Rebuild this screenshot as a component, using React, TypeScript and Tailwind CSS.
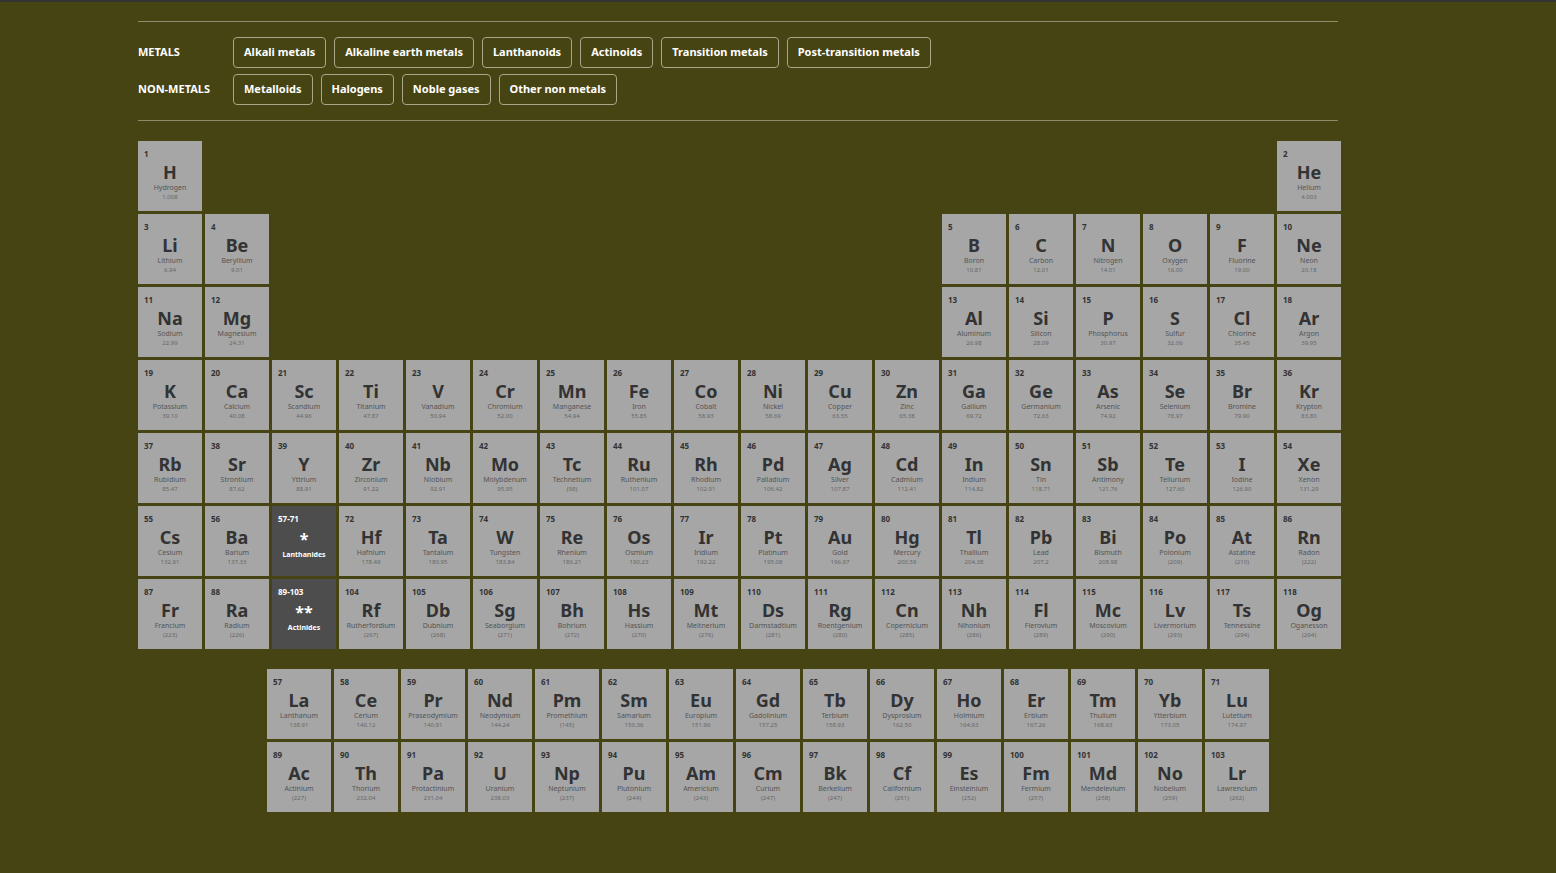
const E = `1 H Hydrogen 1.008 1 1
2 He Helium 4.003 1 18
3 Li Lithium 6.94 2 1
4 Be Beryllium 9.01 2 2
5 B Boron 10.81 2 13
6 C Carbon 12.01 2 14
7 N Nitrogen 14.01 2 15
8 O Oxygen 16.00 2 16
9 F Fluorine 19.00 2 17
10 Ne Neon 20.18 2 18
11 Na Sodium 22.99 3 1
12 Mg Magnesium 24.31 3 2
13 Al Aluminum 26.98 3 13
14 Si Silicon 28.09 3 14
15 P Phosphorus 30.97 3 15
16 S Sulfur 32.06 3 16
17 Cl Chlorine 35.45 3 17
18 Ar Argon 39.95 3 18
19 K Potassium 39.10 4 1
20 Ca Calcium 40.08 4 2
21 Sc Scandium 44.96 4 3
22 Ti Titanium 47.87 4 4
23 V Vanadium 50.94 4 5
24 Cr Chromium 52.00 4 6
25 Mn Manganese 54.94 4 7
26 Fe Iron 55.85 4 8
27 Co Cobalt 58.93 4 9
28 Ni Nickel 58.69 4 10
29 Cu Copper 63.55 4 11
30 Zn Zinc 65.38 4 12
31 Ga Gallium 69.72 4 13
32 Ge Germanium 72.63 4 14
33 As Arsenic 74.92 4 15
34 Se Selenium 78.97 4 16
35 Br Bromine 79.90 4 17
36 Kr Krypton 83.80 4 18
37 Rb Rubidium 85.47 5 1
38 Sr Strontium 87.62 5 2
39 Y Yttrium 88.91 5 3
40 Zr Zirconium 91.22 5 4
41 Nb Niobium 92.91 5 5
42 Mo Molybdenum 95.95 5 6
43 Tc Technetium (98) 5 7
44 Ru Ruthenium 101.07 5 8
45 Rh Rhodium 102.91 5 9
46 Pd Palladium 106.42 5 10
47 Ag Silver 107.87 5 11
48 Cd Cadmium 112.41 5 12
49 In Indium 114.82 5 13
50 Sn Tin 118.71 5 14
51 Sb Antimony 121.76 5 15
52 Te Tellurium 127.60 5 16
53 I Iodine 126.90 5 17
54 Xe Xenon 131.29 5 18
55 Cs Cesium 132.91 6 1
56 Ba Barium 137.33 6 2
72 Hf Hafnium 178.49 6 4
73 Ta Tantalum 180.95 6 5
74 W Tungsten 183.84 6 6
75 Re Rhenium 186.21 6 7
76 Os Osmium 190.23 6 8
77 Ir Iridium 192.22 6 9
78 Pt Platinum 195.08 6 10
79 Au Gold 196.97 6 11
80 Hg Mercury 200.59 6 12
81 Tl Thallium 204.38 6 13
82 Pb Lead 207.2 6 14
83 Bi Bismuth 208.98 6 15
84 Po Polonium (209) 6 16
85 At Astatine (210) 6 17
86 Rn Radon (222) 6 18
87 Fr Francium (223) 7 1
88 Ra Radium (226) 7 2
104 Rf Rutherfordium (267) 7 4
105 Db Dubnium (268) 7 5
106 Sg Seaborgium (271) 7 6
107 Bh Bohrium (272) 7 7
108 Hs Hassium (270) 7 8
109 Mt Meitnerium (276) 7 9
110 Ds Darmstadtium (281) 7 10
111 Rg Roentgenium (280) 7 11
112 Cn Copernicium (285) 7 12
113 Nh Nihonium (286) 7 13
114 Fl Flerovium (289) 7 14
115 Mc Moscovium (290) 7 15
116 Lv Livermorium (293) 7 16
117 Ts Tennessine (294) 7 17
118 Og Oganesson (294) 7 18
57 La Lanthanum 138.91 1 1
58 Ce Cerium 140.12 1 2
59 Pr Praseodymium 140.91 1 3
60 Nd Neodymium 144.24 1 4
61 Pm Promethium (145) 1 5
62 Sm Samarium 150.36 1 6
63 Eu Europium 151.96 1 7
64 Gd Gadolinium 157.25 1 8
65 Tb Terbium 158.93 1 9
66 Dy Dysprosium 162.50 1 10
67 Ho Holmium 164.93 1 11
68 Er Erbium 167.26 1 12
69 Tm Thulium 168.93 1 13
70 Yb Ytterbium 173.05 1 14
71 Lu Lutetium 174.97 1 15
89 Ac Actinium (227) 2 1
90 Th Thorium 232.04 2 2
91 Pa Protactinium 231.04 2 3
92 U Uranium 238.03 2 4
93 Np Neptunium (237) 2 5
94 Pu Plutonium (244) 2 6
95 Am Americium (243) 2 7
96 Cm Curium (247) 2 8
97 Bk Berkelium (247) 2 9
98 Cf Californium (251) 2 10
99 Es Einsteinium (252) 2 11
100 Fm Fermium (257) 2 12
101 Md Mendelevium (258) 2 13
102 No Nobelium (259) 2 14
103 Lr Lawrencium (262) 2 15`
  .split("\n")
  .map((l) => {
    const [n, s, name, m, r, c] = l.split(" ");
    return { n: +n, s, name, m, r: +r, c: +c };
  });

const main = E.filter((e) => e.n < 57 || (e.n > 71 && e.n < 89) || e.n > 103);
const fblock = E.filter((e) => (e.n >= 57 && e.n <= 71) || (e.n >= 89 && e.n <= 103));

type El = (typeof E)[number];

function Cell({ e }: { e: El }) {
  return (
    <div
      className="w-[64px] h-[70px] bg-[#a6a6a6] text-[#333] flex flex-col items-center pt-[9px] leading-none"
      style={{ gridRow: e.r, gridColumn: e.c }}
    >
      <div className="self-start pl-[6px] text-[8px] font-bold">{e.n}</div>
      <div className="mt-[5px] text-[18px] font-bold">{e.s}</div>
      <div className="mt-[3px] text-[7px] text-[#555]">{e.name}</div>
      <div className="mt-[3px] text-[6px] text-[#666]">{e.m}</div>
    </div>
  );
}

function Group({ row, range, star, label }: { row: number; range: string; star: string; label: string }) {
  return (
    <div
      className="w-[64px] h-[70px] bg-[#4d4d4d] text-white flex flex-col items-center pt-[9px] leading-none font-bold"
      style={{ gridRow: row, gridColumn: 3 }}
    >
      <div className="self-start pl-[6px] text-[8px]">{range}</div>
      <div className="mt-[8px] text-[16px]">{star}</div>
      <div className="mt-[4px] text-[7px]">{label}</div>
    </div>
  );
}

const btn = "h-[31px] px-[10px] border border-[#a9a78a] rounded-[4px] text-white text-[11px] font-bold flex items-center";

export default function App() {
  return (
    <div className="min-h-[873px] bg-[#464413] border-t-2 border-[#333] font-['Liberation_Sans',Arial,sans-serif]">
      <div className="ml-[138px] w-[1200px] pt-[19px]">
        <div className="border-t border-[#8e8c6c]" />
        <div className="py-[15px] flex flex-col gap-[6px]">
          <div className="flex items-center gap-[8px]">
            <div className="w-[87px] text-white text-[11px] font-bold">METALS</div>
            {["Alkali metals", "Alkaline earth metals", "Lanthanoids", "Actinoids", "Transition metals", "Post-transition metals"].map((t) => (
              <div key={t} className={btn}>{t}</div>
            ))}
          </div>
          <div className="flex items-center gap-[8px]">
            <div className="w-[87px] text-white text-[11px] font-bold">NON-METALS</div>
            {["Metalloids", "Halogens", "Noble gases", "Other non metals"].map((t) => (
              <div key={t} className={btn}>{t}</div>
            ))}
          </div>
        </div>
        <div className="border-t border-[#8e8c6c]" />
        <div className="mt-[20px] grid grid-cols-[repeat(18,64px)] grid-rows-[repeat(7,70px)] gap-[3px]">
          {main.map((e) => (
            <Cell key={e.n} e={e} />
          ))}
          <Group row={6} range="57-71" star="*" label="Lanthanides" />
          <Group row={7} range="89-103" star="**" label="Actinides" />
        </div>
        <div className="mt-[20px] ml-[129px] grid grid-cols-[repeat(15,64px)] grid-rows-[repeat(2,70px)] gap-[3px]">
          {fblock.map((e) => (
            <Cell key={e.n} e={e} />
          ))}
        </div>
      </div>
    </div>
  );
}
